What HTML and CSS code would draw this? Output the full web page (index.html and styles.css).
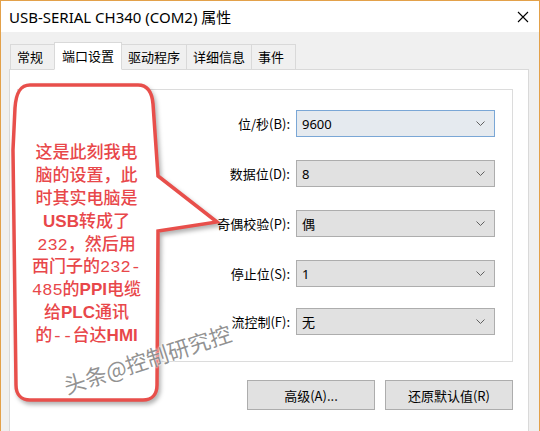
FILE: index.html
```html
<!doctype html>
<html lang="zh-CN">
  <head>
    <meta charset="UTF-8" />
    <title>USB-SERIAL CH340 (COM2) 属性</title>
    <link rel="stylesheet" href="styles.css">
  </head>
  <body>
    <div class="window">
      <div class="titlebar">
        <span class="title">USB-SERIAL CH340 (COM2) 属性</span>
        <svg class="close" width="12" height="12" viewBox="0 0 12 12">
          <path d="M1 1 L11 11 M11 1 L1 11" stroke="#000" stroke-width="1.1" fill="none" />
        </svg>
      </div>

      <div class="content">
        <div class="tabs">
          <div class="tab">常规</div>
          <div class="tab active">端口设置</div>
          <div class="tab">驱动程序</div>
          <div class="tab">详细信息</div>
          <div class="tab">事件</div>
        </div>

        <div class="panel">
          <div class="group">
            <div class="row">
              <label>位/秒(B):</label>
              <div class="select focused"><span>9600</span><svg class="chev" width="9" height="5" viewBox="0 0 9 5"><path d="M0.5 0.5 L4.5 4.5 L8.5 0.5" stroke="#606060" fill="none" /></svg></div>
            </div>
            <div class="row">
              <label>数据位(D):</label>
              <div class="select"><span>8</span><svg class="chev" width="9" height="5" viewBox="0 0 9 5"><path d="M0.5 0.5 L4.5 4.5 L8.5 0.5" stroke="#606060" fill="none" /></svg></div>
            </div>
            <div class="row">
              <label>奇偶校验(P):</label>
              <div class="select"><span>偶</span><svg class="chev" width="9" height="5" viewBox="0 0 9 5"><path d="M0.5 0.5 L4.5 4.5 L8.5 0.5" stroke="#606060" fill="none" /></svg></div>
            </div>
            <div class="row">
              <label>停止位(S):</label>
              <div class="select"><span>1</span><svg class="chev" width="9" height="5" viewBox="0 0 9 5"><path d="M0.5 0.5 L4.5 4.5 L8.5 0.5" stroke="#606060" fill="none" /></svg></div>
            </div>
            <div class="row">
              <label>流控制(F):</label>
              <div class="select"><span>无</span><svg class="chev" width="9" height="5" viewBox="0 0 9 5"><path d="M0.5 0.5 L4.5 4.5 L8.5 0.5" stroke="#606060" fill="none" /></svg></div>
            </div>
          </div>

          <div class="buttons">
            <button class="button">高级(A)...</button>
            <button class="button">还原默认值(R)</button>
          </div>
        </div>
      </div>

      <!-- callout drawn over the dialog -->
      <svg class="bubble" width="540" height="431" viewBox="0 0 540 431">
        <path d="M30 85 L138 85 C148 85 152 92 153 104 L158 176 L217 222 L158 231 L157 385 C157 394 152 400 143 400 L30 400 C21 400 16 394 16 385 L13 150 L15 108 C16 93 20 85 30 85 Z"
              fill="#fff" stroke="#e84f4b" stroke-width="3.5" stroke-linejoin="miter" />
      </svg>
      <div class="bubble-text">
        <div class="line">这是此刻我电</div>
        <div class="line">脑的设置，此</div>
        <div class="line">时其实电脑是</div>
        <div class="line"><b>USB</b>转成了</div>
        <div class="line"><span class="num">232</span>，然后用</div>
        <div class="line">西门子的<span class="num">232-</span></div>
        <div class="line"><span class="num">485</span>的<b>PPI</b>电缆</div>
        <div class="line">给<b>PLC</b>通讯</div>
        <div class="line">的<span class="num">--</span>台达<b>HMI</b></div>
      </div>
      <div class="watermark">头条@控制研究控</div>
    </div>
  </body>
</html>
```

FILE: styles.css
```css
* {
  margin: 0;
  padding: 0;
  box-sizing: border-box;
}

body {
  font-family: "Noto Sans", "Noto Sans CJK SC", sans-serif;
  background: #f0f0f0;
}

.window {
  position: relative;
  width: 540px;
  height: 431px;
  overflow: hidden;
  border: 1px solid #e3a14a;
  border-bottom: none;
  background: #f0f0f0;
}

.titlebar {
  height: 31px;
  background: #fff;
  display: flex;
  align-items: center;
  justify-content: space-between;
  padding: 0 10px 0 8px;
}

.title {
  font-size: 15px;
  color: #000;
}

.close {
  display: block;
}

.content {
  padding-top: 10px;
}

.tabs {
  display: flex;
  align-items: flex-end;
  height: 28px;
  margin: 0 0 -1px 9px;
}

.tab {
  height: 26px;
  min-width: 45px;
  padding: 0 6px;
  border: 1px solid #d9d9d9;
  margin-left: -1px;
  background: #f0f0f0;
  font-family: "Noto Sans CJK SC", sans-serif;
  font-size: 13px;
  line-height: 24px;
  color: #000;
}

.tab:first-child {
  margin-left: 0;
}

.tab.active {
  position: relative;
  z-index: 1;
  height: 28px;
  line-height: 26px;
  background: #fff;
  border-bottom-color: #fff;
  padding: 0 7px;
}

.panel {
  background: #fff;
  border: 1px solid #d9d9d9;
  margin: 0 10px 0 8px;
  height: 400px;
  padding: 19px 15px 0 7px;
}

.group {
  border: 1px solid #dcdcdc;
  padding: 20px 17px 26px 0;
  display: flex;
  flex-direction: column;
  gap: 23px;
}

.row {
  display: flex;
  align-items: center;
  justify-content: flex-end;
  gap: 6px;
}

.row:last-child {
  margin-top: -2px;
}

label {
  font-family: "Noto Sans CJK SC", sans-serif;
  font-size: 13px;
  color: #000;
}

.select {
  width: 199px;
  height: 27px;
  border: 1px solid #adadad;
  background: #e1e1e1;
  display: flex;
  align-items: center;
  justify-content: space-between;
  padding: 0 9px 0 5px;
  font-family: "Noto Sans", "Noto Sans CJK SC", sans-serif;
  font-size: 13px;
  color: #000;
}

.select.focused {
  border-color: #7aa7d6;
  background: #e5eaef;
}

.chev {
  display: block;
}

.buttons {
  display: flex;
  justify-content: flex-end;
  gap: 10px;
  margin-top: 18px;
}

.button {
  width: 128px;
  height: 30px;
  border: 1px solid #adadad;
  background: #e1e1e1;
  font-family: "Noto Sans CJK SC", sans-serif;
  font-size: 13px;
  color: #000;
}

.bubble {
  position: absolute;
  left: -1px;
  top: -1px;
  filter: drop-shadow(2px 3px 2px rgba(0, 0, 0, 0.3));
}

.bubble-text {
  position: absolute;
  left: 12px;
  top: 139px;
  width: 147px;
  text-align: center;
  font-family: "Noto Sans CJK SC", sans-serif;
  font-size: 17px;
  font-weight: 500;
  color: #e8474a;
}

.line {
  height: 22.9px;
  line-height: 22.9px;
  white-space: nowrap;
}

.bubble-text b {
  font-family: "Liberation Sans", sans-serif;
  font-weight: bold;
}

.bubble-text .num {
  font-family: "Liberation Mono", monospace;
  font-weight: normal;
}

.watermark {
  position: absolute;
  left: 146px;
  top: 357px;
  transform: translate(-50%, -50%) rotate(-18deg);
  white-space: nowrap;
  font-family: "Noto Sans CJK SC", sans-serif;
  font-size: 22px;
  color: rgba(110, 110, 110, 0.75);
  text-shadow: 0 0 2px #fff, 0 0 2px #fff;
}
```
